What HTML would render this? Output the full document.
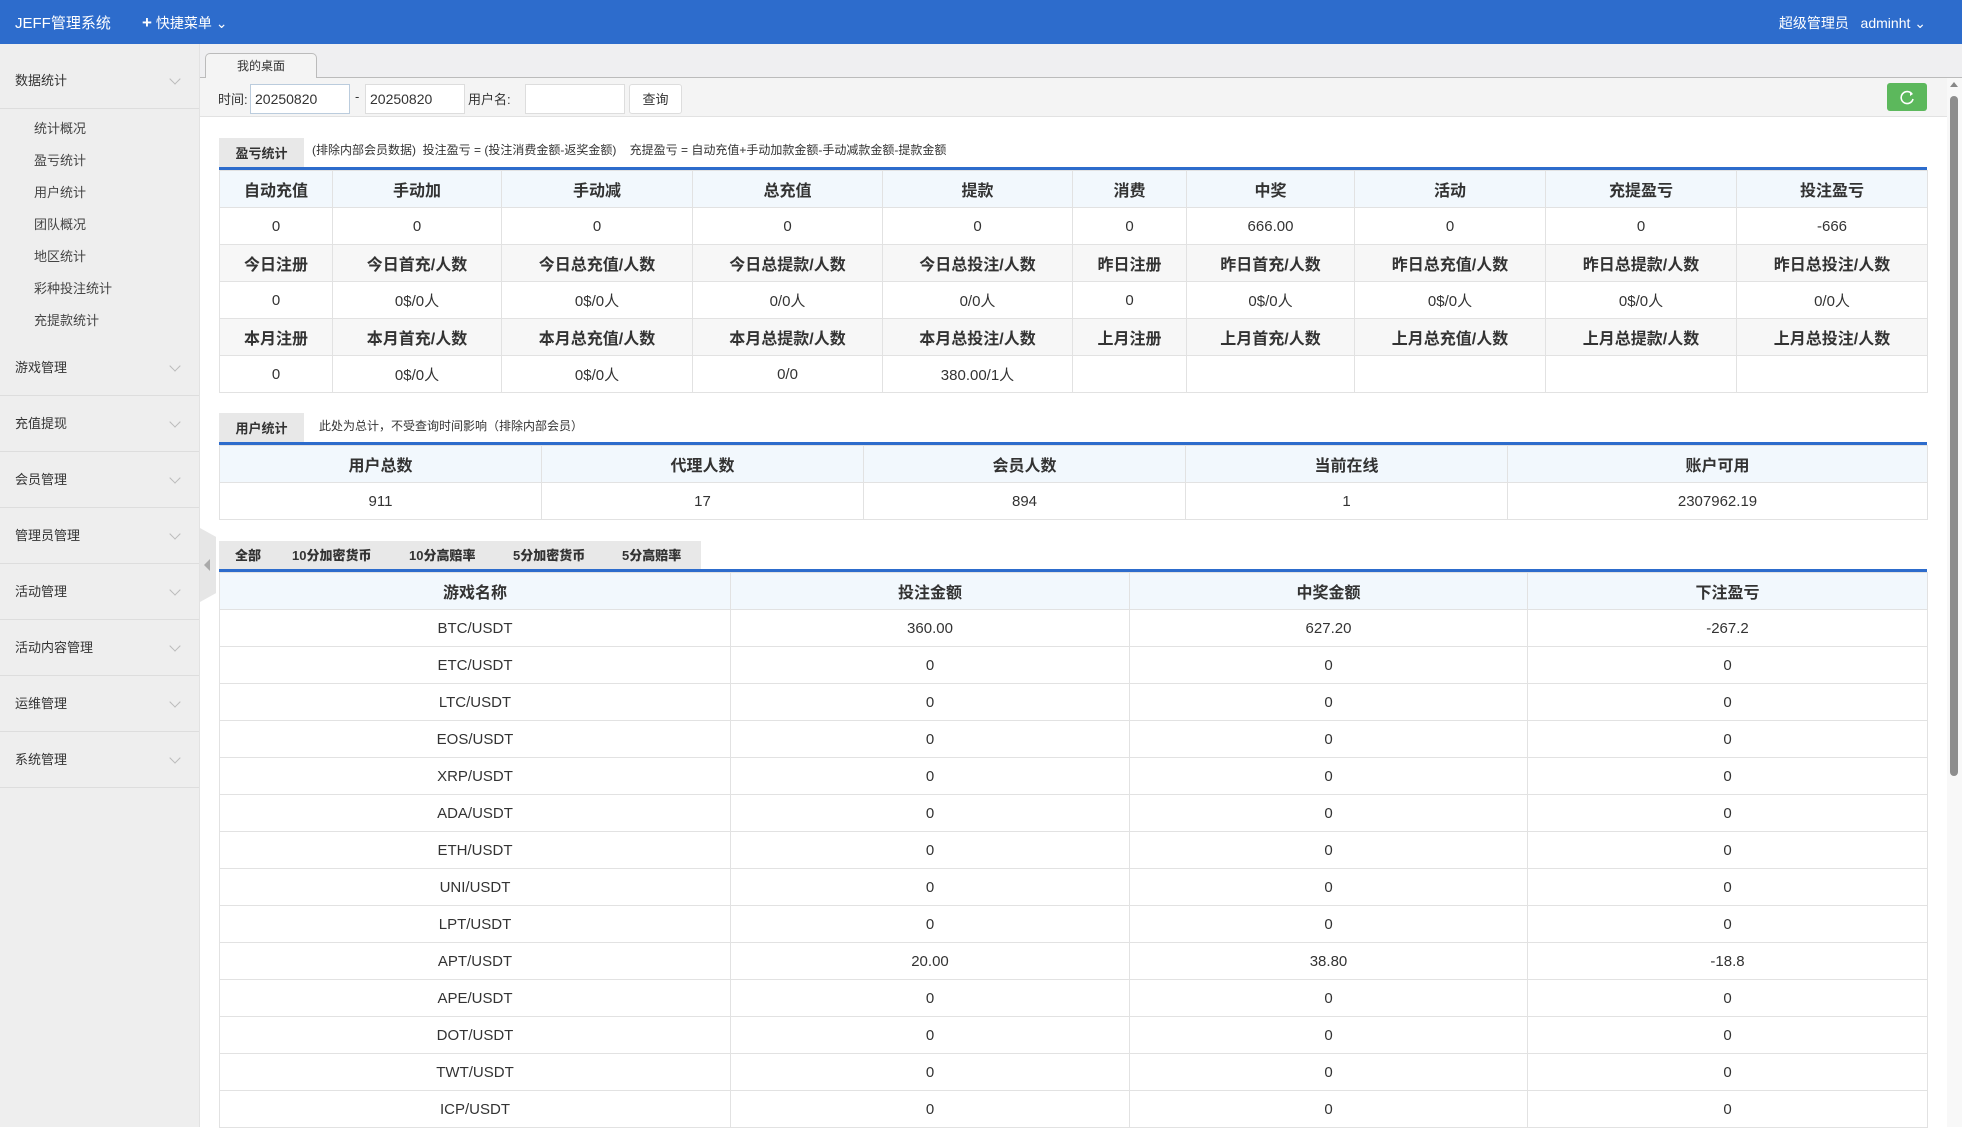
<!DOCTYPE html>
<html><head><meta charset="utf-8"><style>
*{margin:0;padding:0;box-sizing:border-box}
body{width:1962px;height:1127px;overflow:hidden;background:#fff;font-family:"Liberation Sans","Noto Sans CJK SC",sans-serif;color:#333;position:relative}
.nav{position:absolute;left:0;top:0;width:1962px;height:44px;background:#2d6ccc;color:#fff}
.nav .t{position:absolute;left:15px;top:12px;font-size:15px}
.nav .q{position:absolute;left:142px;top:13px;font-size:14px}
.nav .u{position:absolute;right:36px;top:13px;font-size:14px}
.side{position:absolute;left:0;top:44px;width:200px;height:1083px;background:#eee;border-right:1px solid #e2e2e2}
.sh{height:56px;line-height:56px;padding-left:15px;font-size:13px;color:#333;border-bottom:1px solid #ddd;position:relative}
.sh:after{content:"";position:absolute;right:20px;top:22px;width:7px;height:7px;border-right:1px solid #bbb;border-bottom:1px solid #bbb;transform:rotate(45deg)}
.si{height:32px;line-height:32px;padding-left:34px;font-size:13px;color:#444}
.tabbar{position:absolute;left:200px;top:44px;width:1762px;height:34px;background:#efeff1;border-bottom:1px solid #bbb}
.tab{position:absolute;left:5px;top:9px;width:112px;height:26px;background:#f4f4f4;border:1px solid #bbb;border-bottom:none;border-radius:5px 5px 0 0;font-size:12px;text-align:center;line-height:24px}
.tool{position:absolute;left:200px;top:78px;width:1747px;height:39px;background:#f4f4f4;border-bottom:1px solid #e2e2e2;font-size:13px}
.tool span{position:absolute;top:11px}
.inp{position:absolute;top:6px;height:30px;background:#fff;border:1px solid #ddd;font-size:14px;padding-left:4px;line-height:28px}
.btn{position:absolute;left:429px;top:6px;width:53px;height:30px;border:1px solid #ddd;border-radius:3px;background:#fff;font-size:13px;text-align:center;line-height:30px}
.ref{position:absolute;left:1687px;top:5px;width:40px;height:28px;background:#5cb85c;border-radius:3px}
.scroll{position:absolute;left:1947px;top:78px;width:15px;height:1049px;background:#f8f8f8}
.thumb{position:absolute;left:3px;top:18px;width:8px;height:680px;background:#8e8e8e;border-radius:4px}
.handle{position:absolute;left:200px;top:528px;width:16px;height:74px;background:#e6e6e6;clip-path:polygon(0 0,100% 12%,100% 88%,0 100%)}
.handle:after{content:"";position:absolute;left:4px;top:31px;border:6px solid transparent;border-right:6px solid #aaa;border-left:none}
.lab{position:absolute;height:30px;background:#e8e8e8;font-size:13px;font-weight:bold;line-height:32px;text-align:center}
.note{position:absolute;font-size:12px;color:#333}
.bl{position:absolute;left:219px;width:1708px;height:3px;background:#2d6ccc}
table{position:absolute;left:219px;width:1708px;border-collapse:collapse;table-layout:fixed}
td{border:1px solid #e2e2e2;height:37px;text-align:center;font-size:15px;color:#333}
tr.h td{background:#f2f8fd;font-weight:bold;font-size:16px}
tr.g td{background:#f7f7f7;font-weight:bold;font-size:16px}
.gt{position:absolute;left:219px;top:541px;width:482px;height:29px;background:#e8e8e8;font-size:13px;font-weight:bold;line-height:29px}
.gt b{position:absolute}
</style></head><body>
<div class="nav"><div class="t">JEFF管理系统</div><div class="q"><b style="font-size:17px">+</b> 快捷菜单 ⌄</div><div class="u">超级管理员&nbsp;&nbsp; adminht ⌄</div></div>
<div class="side"><div style="height:9px"></div>
<div class="sh">数据统计</div>
<div style="height:4px"></div>
<div class="si">统计概况</div><div class="si">盈亏统计</div><div class="si">用户统计</div><div class="si">团队概况</div><div class="si">地区统计</div><div class="si">彩种投注统计</div><div class="si">充提款统计</div>
<div style="height:3px"></div>
<div class="sh">游戏管理</div><div class="sh">充值提现</div><div class="sh">会员管理</div><div class="sh">管理员管理</div><div class="sh">活动管理</div><div class="sh">活动内容管理</div><div class="sh">运维管理</div><div class="sh">系统管理</div>
</div>
<div class="tabbar"><div class="tab">我的桌面</div></div>
<div class="tool"><span style="left:18px">时间:</span><div class="inp" style="left:50px;width:100px;border-color:#bcd">20250820</div><span style="left:155px">-</span><div class="inp" style="left:165px;width:100px">20250820</div><span style="left:268px">用户名:</span><div class="inp" style="left:325px;width:100px"></div><div class="btn">查询</div>
<div class="ref"><svg width="40" height="28"><path d="M25 11 A6 6 0 1 0 26 16" fill="none" stroke="#fff" stroke-width="1.6"/><path d="M23 9 L26 11 L23 13" fill="#fff"/></svg></div></div>
<div class="scroll"><div style="position:absolute;left:3px;top:4px;border:4px solid transparent;border-bottom:5px solid #888;border-top:none"></div><div class="thumb"></div></div>
<div class="handle"></div>

<div class="lab" style="left:219px;top:138px;width:85px">盈亏统计</div>
<div class="note" style="left:312px;top:141px">(排除内部会员数据)&nbsp; 投注盈亏 = (投注消费金额-返奖金额)&nbsp;&nbsp;&nbsp; 充提盈亏 = 自动充值+手动加款金额-手动减款金额-提款金额</div>
<div class="bl" style="top:167px"></div>
<table style="top:170px"><colgroup><col style="width:113px"><col style="width:169px"><col style="width:191px"><col style="width:190px"><col style="width:190px"><col style="width:114px"><col style="width:168px"><col style="width:191px"><col style="width:191px"><col style="width:191px"></colgroup>
<tr class="h"><td>自动充值</td><td>手动加</td><td>手动减</td><td>总充值</td><td>提款</td><td>消费</td><td>中奖</td><td>活动</td><td>充提盈亏</td><td>投注盈亏</td></tr>
<tr><td>0</td><td>0</td><td>0</td><td>0</td><td>0</td><td>0</td><td>666.00</td><td>0</td><td>0</td><td>-666</td></tr>
<tr class="g"><td>今日注册</td><td>今日首充/人数</td><td>今日总充值/人数</td><td>今日总提款/人数</td><td>今日总投注/人数</td><td>昨日注册</td><td>昨日首充/人数</td><td>昨日总充值/人数</td><td>昨日总提款/人数</td><td>昨日总投注/人数</td></tr>
<tr><td>0</td><td>0$/0人</td><td>0$/0人</td><td>0/0人</td><td>0/0人</td><td>0</td><td>0$/0人</td><td>0$/0人</td><td>0$/0人</td><td>0/0人</td></tr>
<tr class="g"><td>本月注册</td><td>本月首充/人数</td><td>本月总充值/人数</td><td>本月总提款/人数</td><td>本月总投注/人数</td><td>上月注册</td><td>上月首充/人数</td><td>上月总充值/人数</td><td>上月总提款/人数</td><td>上月总投注/人数</td></tr>
<tr><td>0</td><td>0$/0人</td><td>0$/0人</td><td>0/0</td><td>380.00/1人</td><td></td><td></td><td></td><td></td><td></td></tr>
</table>

<div class="lab" style="left:219px;top:413px;width:85px">用户统计</div>
<div class="note" style="left:319px;top:417px">此处为总计，不受查询时间影响（排除内部会员）</div>
<div class="bl" style="top:442px"></div>
<table style="top:445px"><colgroup><col style="width:322px"><col style="width:322px"><col style="width:322px"><col style="width:322px"><col style="width:420px"></colgroup>
<tr class="h"><td>用户总数</td><td>代理人数</td><td>会员人数</td><td>当前在线</td><td>账户可用</td></tr>
<tr><td>911</td><td>17</td><td>894</td><td>1</td><td>2307962.19</td></tr></table>

<div class="gt"><b style="left:16px">全部</b><b style="left:73px">10分加密货币</b><b style="left:190px">10分高赔率</b><b style="left:294px">5分加密货币</b><b style="left:403px">5分高赔率</b></div>
<div class="bl" style="top:569px"></div>
<table style="top:572px"><colgroup><col style="width:511px"><col style="width:399px"><col style="width:398px"><col style="width:400px"></colgroup>
<tr class="h"><td>游戏名称</td><td>投注金额</td><td>中奖金额</td><td>下注盈亏</td></tr>
<tr><td>BTC/USDT</td><td>360.00</td><td>627.20</td><td>-267.2</td></tr>
<tr><td>ETC/USDT</td><td>0</td><td>0</td><td>0</td></tr>
<tr><td>LTC/USDT</td><td>0</td><td>0</td><td>0</td></tr>
<tr><td>EOS/USDT</td><td>0</td><td>0</td><td>0</td></tr>
<tr><td>XRP/USDT</td><td>0</td><td>0</td><td>0</td></tr>
<tr><td>ADA/USDT</td><td>0</td><td>0</td><td>0</td></tr>
<tr><td>ETH/USDT</td><td>0</td><td>0</td><td>0</td></tr>
<tr><td>UNI/USDT</td><td>0</td><td>0</td><td>0</td></tr>
<tr><td>LPT/USDT</td><td>0</td><td>0</td><td>0</td></tr>
<tr><td>APT/USDT</td><td>20.00</td><td>38.80</td><td>-18.8</td></tr>
<tr><td>APE/USDT</td><td>0</td><td>0</td><td>0</td></tr>
<tr><td>DOT/USDT</td><td>0</td><td>0</td><td>0</td></tr>
<tr><td>TWT/USDT</td><td>0</td><td>0</td><td>0</td></tr>
<tr><td>ICP/USDT</td><td>0</td><td>0</td><td>0</td></tr>
</table>
</body></html>
